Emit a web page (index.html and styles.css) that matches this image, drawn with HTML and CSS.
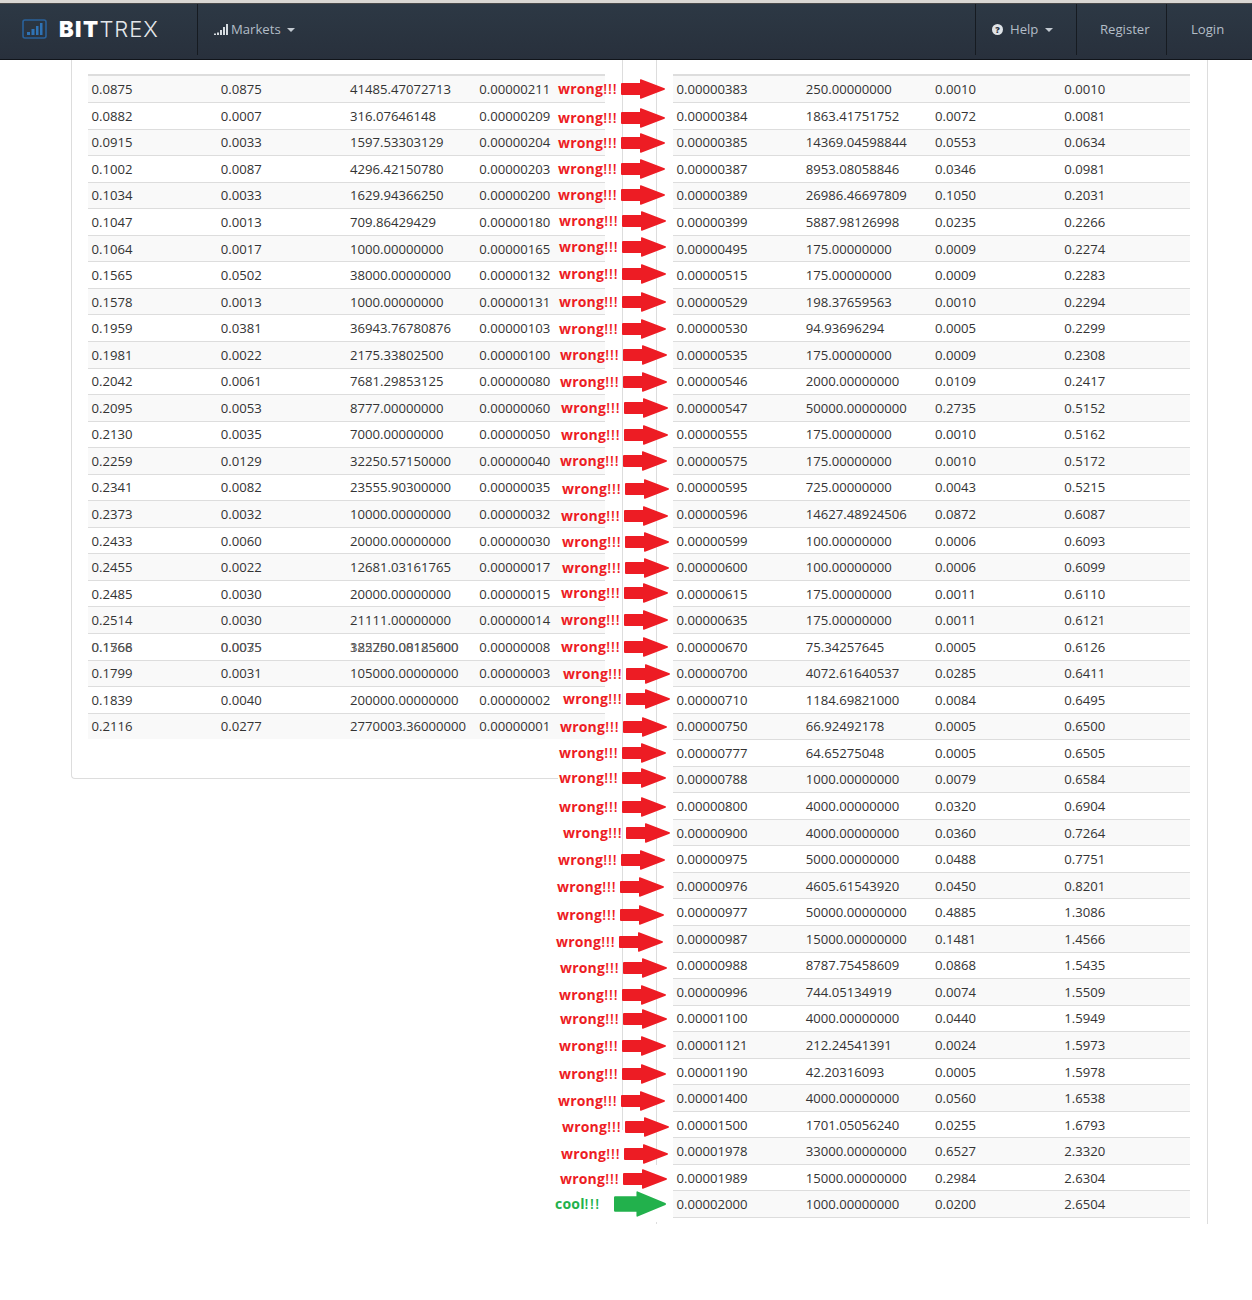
FILE: index.html
```html
<!DOCTYPE html>
<html lang="en">
<head>
<meta charset="utf-8">
<title>Bittrex</title>
<link rel="stylesheet" href="styles.css">
</head>
<body>
<header class="navbar">
  <div class="chrome"></div>
  <nav class="nav">
    <a class="brand">
      <svg class="brand-icon" width="25" height="20" viewBox="0 0 25 20"><rect x="1" y="1" width="23" height="18" rx="2" fill="none" stroke="#2a629b" stroke-width="1.6"/><path d="M5 13h3v3H5zM9.500 10h3v6h-3zM14 7h2.500v9H14zM18 4h2.500v12H18z" fill="#2f73b5"/></svg>
      <span class="brand-name"><b>BIT</b>TREX</span>
    </a>
    <a class="item item-markets">
      <svg class="bars" width="14" height="11" viewBox="0 0 14 11"><path d="M0 9.500h2V11H0zM3 8.500h2V11H3zM6 6h2v5H6zM9 3h2v8H9zM12 0h2v11h-2z" fill="#d5dbe0"/></svg>
      Markets<span class="caret"></span>
    </a>
    <div class="nav-right">
      <a class="item item-help"><span class="help-icon">?</span>Help<span class="caret"></span></a>
      <a class="item item-register">Register</a>
      <a class="item item-login">Login</a>
    </div>
  </nav>
</header>

<main class="board">
  <section class="panel panel-left">
    <div class="book">
      <div class="row head"><span>Sum (BTC)</span><span>Total (BTC)</span><span>Size (ETH)</span><span>Bid (BTC)</span></div>
      <div class="row"><span>0.0875</span><span>0.0875</span><span>41485.47072713</span><span>0.00000211</span></div>
      <div class="row"><span>0.0882</span><span>0.0007</span><span>316.07646148</span><span>0.00000209</span></div>
      <div class="row"><span>0.0915</span><span>0.0033</span><span>1597.53303129</span><span>0.00000204</span></div>
      <div class="row"><span>0.1002</span><span>0.0087</span><span>4296.42150780</span><span>0.00000203</span></div>
      <div class="row"><span>0.1034</span><span>0.0033</span><span>1629.94366250</span><span>0.00000200</span></div>
      <div class="row"><span>0.1047</span><span>0.0013</span><span>709.86429429</span><span>0.00000180</span></div>
      <div class="row"><span>0.1064</span><span>0.0017</span><span>1000.00000000</span><span>0.00000165</span></div>
      <div class="row"><span>0.1565</span><span>0.0502</span><span>38000.00000000</span><span>0.00000132</span></div>
      <div class="row"><span>0.1578</span><span>0.0013</span><span>1000.00000000</span><span>0.00000131</span></div>
      <div class="row"><span>0.1959</span><span>0.0381</span><span>36943.76780876</span><span>0.00000103</span></div>
      <div class="row"><span>0.1981</span><span>0.0022</span><span>2175.33802500</span><span>0.00000100</span></div>
      <div class="row"><span>0.2042</span><span>0.0061</span><span>7681.29853125</span><span>0.00000080</span></div>
      <div class="row"><span>0.2095</span><span>0.0053</span><span>8777.00000000</span><span>0.00000060</span></div>
      <div class="row"><span>0.2130</span><span>0.0035</span><span>7000.00000000</span><span>0.00000050</span></div>
      <div class="row"><span>0.2259</span><span>0.0129</span><span>32250.57150000</span><span>0.00000040</span></div>
      <div class="row"><span>0.2341</span><span>0.0082</span><span>23555.90300000</span><span>0.00000035</span></div>
      <div class="row"><span>0.2373</span><span>0.0032</span><span>10000.00000000</span><span>0.00000032</span></div>
      <div class="row"><span>0.2433</span><span>0.0060</span><span>20000.00000000</span><span>0.00000030</span></div>
      <div class="row"><span>0.2455</span><span>0.0022</span><span>12681.03161765</span><span>0.00000017</span></div>
      <div class="row"><span>0.2485</span><span>0.0030</span><span>20000.00000000</span><span>0.00000015</span></div>
      <div class="row"><span>0.2514</span><span>0.0030</span><span>21111.00000000</span><span>0.00000014</span></div>
      <div class="row"><span class="ghosted">0.1768<i>0.1566</i></span><span class="ghosted">0.0075<i>0.0035</i></span><span class="ghosted">125250.08125000<i>382700.00185600</i></span><span>0.00000008</span></div>
      <div class="row"><span>0.1799</span><span>0.0031</span><span>105000.00000000</span><span>0.00000003</span></div>
      <div class="row"><span>0.1839</span><span>0.0040</span><span>200000.00000000</span><span>0.00000002</span></div>
      <div class="row"><span>0.2116</span><span>0.0277</span><span>2770003.36000000</span><span>0.00000001</span></div>
    </div>
  </section>

  <section class="panel panel-right">
    <div class="book closed">
      <div class="row head"><span>Ask (BTC)</span><span>Size (ETH)</span><span>Total (BTC)</span><span>Sum (BTC)</span></div>
      <div class="row"><span>0.00000383</span><span>250.00000000</span><span>0.0010</span><span>0.0010</span></div>
      <div class="row"><span>0.00000384</span><span>1863.41751752</span><span>0.0072</span><span>0.0081</span></div>
      <div class="row"><span>0.00000385</span><span>14369.04598844</span><span>0.0553</span><span>0.0634</span></div>
      <div class="row"><span>0.00000387</span><span>8953.08058846</span><span>0.0346</span><span>0.0981</span></div>
      <div class="row"><span>0.00000389</span><span>26986.46697809</span><span>0.1050</span><span>0.2031</span></div>
      <div class="row"><span>0.00000399</span><span>5887.98126998</span><span>0.0235</span><span>0.2266</span></div>
      <div class="row"><span>0.00000495</span><span>175.00000000</span><span>0.0009</span><span>0.2274</span></div>
      <div class="row"><span>0.00000515</span><span>175.00000000</span><span>0.0009</span><span>0.2283</span></div>
      <div class="row"><span>0.00000529</span><span>198.37659563</span><span>0.0010</span><span>0.2294</span></div>
      <div class="row"><span>0.00000530</span><span>94.93696294</span><span>0.0005</span><span>0.2299</span></div>
      <div class="row"><span>0.00000535</span><span>175.00000000</span><span>0.0009</span><span>0.2308</span></div>
      <div class="row"><span>0.00000546</span><span>2000.00000000</span><span>0.0109</span><span>0.2417</span></div>
      <div class="row"><span>0.00000547</span><span>50000.00000000</span><span>0.2735</span><span>0.5152</span></div>
      <div class="row"><span>0.00000555</span><span>175.00000000</span><span>0.0010</span><span>0.5162</span></div>
      <div class="row"><span>0.00000575</span><span>175.00000000</span><span>0.0010</span><span>0.5172</span></div>
      <div class="row"><span>0.00000595</span><span>725.00000000</span><span>0.0043</span><span>0.5215</span></div>
      <div class="row"><span>0.00000596</span><span>14627.48924506</span><span>0.0872</span><span>0.6087</span></div>
      <div class="row"><span>0.00000599</span><span>100.00000000</span><span>0.0006</span><span>0.6093</span></div>
      <div class="row"><span>0.00000600</span><span>100.00000000</span><span>0.0006</span><span>0.6099</span></div>
      <div class="row"><span>0.00000615</span><span>175.00000000</span><span>0.0011</span><span>0.6110</span></div>
      <div class="row"><span>0.00000635</span><span>175.00000000</span><span>0.0011</span><span>0.6121</span></div>
      <div class="row"><span>0.00000670</span><span>75.34257645</span><span>0.0005</span><span>0.6126</span></div>
      <div class="row"><span>0.00000700</span><span>4072.61640537</span><span>0.0285</span><span>0.6411</span></div>
      <div class="row"><span>0.00000710</span><span>1184.69821000</span><span>0.0084</span><span>0.6495</span></div>
      <div class="row"><span>0.00000750</span><span>66.92492178</span><span>0.0005</span><span>0.6500</span></div>
      <div class="row"><span>0.00000777</span><span>64.65275048</span><span>0.0005</span><span>0.6505</span></div>
      <div class="row"><span>0.00000788</span><span>1000.00000000</span><span>0.0079</span><span>0.6584</span></div>
      <div class="row"><span>0.00000800</span><span>4000.00000000</span><span>0.0320</span><span>0.6904</span></div>
      <div class="row"><span>0.00000900</span><span>4000.00000000</span><span>0.0360</span><span>0.7264</span></div>
      <div class="row"><span>0.00000975</span><span>5000.00000000</span><span>0.0488</span><span>0.7751</span></div>
      <div class="row"><span>0.00000976</span><span>4605.61543920</span><span>0.0450</span><span>0.8201</span></div>
      <div class="row"><span>0.00000977</span><span>50000.00000000</span><span>0.4885</span><span>1.3086</span></div>
      <div class="row"><span>0.00000987</span><span>15000.00000000</span><span>0.1481</span><span>1.4566</span></div>
      <div class="row"><span>0.00000988</span><span>8787.75458609</span><span>0.0868</span><span>1.5435</span></div>
      <div class="row"><span>0.00000996</span><span>744.05134919</span><span>0.0074</span><span>1.5509</span></div>
      <div class="row"><span>0.00001100</span><span>4000.00000000</span><span>0.0440</span><span>1.5949</span></div>
      <div class="row"><span>0.00001121</span><span>212.24541391</span><span>0.0024</span><span>1.5973</span></div>
      <div class="row"><span>0.00001190</span><span>42.20316093</span><span>0.0005</span><span>1.5978</span></div>
      <div class="row"><span>0.00001400</span><span>4000.00000000</span><span>0.0560</span><span>1.6538</span></div>
      <div class="row"><span>0.00001500</span><span>1701.05056240</span><span>0.0255</span><span>1.6793</span></div>
      <div class="row"><span>0.00001978</span><span>33000.00000000</span><span>0.6527</span><span>2.3320</span></div>
      <div class="row"><span>0.00001989</span><span>15000.00000000</span><span>0.2984</span><span>2.6304</span></div>
      <div class="row"><span>0.00002000</span><span>1000.00000000</span><span>0.0200</span><span>2.6504</span></div>
    </div>
  </section>

  <div class="rule rule-a"></div>
  <div class="rule rule-b"></div>
  <div class="rule rule-c"></div>

  <svg width="0" height="0" class="defs"><defs><path id="arrow" d="M1 4H19V1Q19 0 20 0.300L43.500 9.300Q44.500 10 43.500 10.700L20 19.700Q19 20 19 19V16H1Q0 16 0 15V5Q0 4 1 4Z"/></defs></svg>

  <div class="note" style="left:558px;top:79px">wrong<em>!!!</em><svg class="arrow"><use href="#arrow"/></svg></div>
  <div class="note" style="left:558px;top:108px">wrong<em>!!!</em><svg class="arrow"><use href="#arrow"/></svg></div>
  <div class="note" style="left:558px;top:133px">wrong<em>!!!</em><svg class="arrow"><use href="#arrow"/></svg></div>
  <div class="note" style="left:558px;top:159px">wrong<em>!!!</em><svg class="arrow"><use href="#arrow"/></svg></div>
  <div class="note" style="left:558px;top:185px">wrong<em>!!!</em><svg class="arrow"><use href="#arrow"/></svg></div>
  <div class="note" style="left:559px;top:211px">wrong<em>!!!</em><svg class="arrow"><use href="#arrow"/></svg></div>
  <div class="note" style="left:559px;top:237px">wrong<em>!!!</em><svg class="arrow"><use href="#arrow"/></svg></div>
  <div class="note" style="left:559px;top:264px">wrong<em>!!!</em><svg class="arrow"><use href="#arrow"/></svg></div>
  <div class="note" style="left:559px;top:292px">wrong<em>!!!</em><svg class="arrow"><use href="#arrow"/></svg></div>
  <div class="note" style="left:559px;top:319px">wrong<em>!!!</em><svg class="arrow"><use href="#arrow"/></svg></div>
  <div class="note" style="left:560px;top:345px">wrong<em>!!!</em><svg class="arrow"><use href="#arrow"/></svg></div>
  <div class="note" style="left:560px;top:372px">wrong<em>!!!</em><svg class="arrow"><use href="#arrow"/></svg></div>
  <div class="note" style="left:561px;top:398px">wrong<em>!!!</em><svg class="arrow"><use href="#arrow"/></svg></div>
  <div class="note" style="left:561px;top:425px">wrong<em>!!!</em><svg class="arrow"><use href="#arrow"/></svg></div>
  <div class="note" style="left:560px;top:451px">wrong<em>!!!</em><svg class="arrow"><use href="#arrow"/></svg></div>
  <div class="note" style="left:562px;top:479px">wrong<em>!!!</em><svg class="arrow"><use href="#arrow"/></svg></div>
  <div class="note" style="left:561px;top:506px">wrong<em>!!!</em><svg class="arrow"><use href="#arrow"/></svg></div>
  <div class="note" style="left:562px;top:532px">wrong<em>!!!</em><svg class="arrow"><use href="#arrow"/></svg></div>
  <div class="note" style="left:562px;top:558px">wrong<em>!!!</em><svg class="arrow"><use href="#arrow"/></svg></div>
  <div class="note" style="left:561px;top:583px">wrong<em>!!!</em><svg class="arrow"><use href="#arrow"/></svg></div>
  <div class="note" style="left:561px;top:610px">wrong<em>!!!</em><svg class="arrow"><use href="#arrow"/></svg></div>
  <div class="note" style="left:561px;top:637px">wrong<em>!!!</em><svg class="arrow"><use href="#arrow"/></svg></div>
  <div class="note" style="left:563px;top:664px">wrong<em>!!!</em><svg class="arrow"><use href="#arrow"/></svg></div>
  <div class="note" style="left:563px;top:689px">wrong<em>!!!</em><svg class="arrow"><use href="#arrow"/></svg></div>
  <div class="note" style="left:560px;top:717px">wrong<em>!!!</em><svg class="arrow"><use href="#arrow"/></svg></div>
  <div class="note" style="left:559px;top:743px">wrong<em>!!!</em><svg class="arrow"><use href="#arrow"/></svg></div>
  <div class="note" style="left:559px;top:768px">wrong<em>!!!</em><svg class="arrow"><use href="#arrow"/></svg></div>
  <div class="note" style="left:559px;top:797px">wrong<em>!!!</em><svg class="arrow"><use href="#arrow"/></svg></div>
  <div class="note" style="left:563px;top:823px">wrong<em>!!!</em><svg class="arrow"><use href="#arrow"/></svg></div>
  <div class="note" style="left:558px;top:850px">wrong<em>!!!</em><svg class="arrow"><use href="#arrow"/></svg></div>
  <div class="note" style="left:557px;top:877px">wrong<em>!!!</em><svg class="arrow"><use href="#arrow"/></svg></div>
  <div class="note" style="left:557px;top:905px">wrong<em>!!!</em><svg class="arrow"><use href="#arrow"/></svg></div>
  <div class="note" style="left:556px;top:932px">wrong<em>!!!</em><svg class="arrow"><use href="#arrow"/></svg></div>
  <div class="note" style="left:560px;top:958px">wrong<em>!!!</em><svg class="arrow"><use href="#arrow"/></svg></div>
  <div class="note" style="left:559px;top:985px">wrong<em>!!!</em><svg class="arrow"><use href="#arrow"/></svg></div>
  <div class="note" style="left:560px;top:1009px">wrong<em>!!!</em><svg class="arrow"><use href="#arrow"/></svg></div>
  <div class="note" style="left:559px;top:1036px">wrong<em>!!!</em><svg class="arrow"><use href="#arrow"/></svg></div>
  <div class="note" style="left:559px;top:1064px">wrong<em>!!!</em><svg class="arrow"><use href="#arrow"/></svg></div>
  <div class="note" style="left:558px;top:1091px">wrong<em>!!!</em><svg class="arrow"><use href="#arrow"/></svg></div>
  <div class="note" style="left:562px;top:1117px">wrong<em>!!!</em><svg class="arrow"><use href="#arrow"/></svg></div>
  <div class="note" style="left:561px;top:1144px">wrong<em>!!!</em><svg class="arrow"><use href="#arrow"/></svg></div>
  <div class="note" style="left:560px;top:1169px">wrong<em>!!!</em><svg class="arrow"><use href="#arrow"/></svg></div>
  <div class="note note-good" style="left:555px;top:1191px">cool<em>!!!</em><svg class="arrow arrow-good" viewBox="0 0 44 20" preserveAspectRatio="none"><use href="#arrow"/></svg></div>
</main>
</body>
</html>
```

FILE: styles.css
```css
* { box-sizing: border-box; }

html, body {
  margin: 0;
  padding: 0;
  background: #fff;
}

body {
  font-family: "Open Sans", "Liberation Sans", sans-serif;
  font-size: 13.130px;
  color: #333;
  position: relative;
  height: 1300px;
  overflow: hidden;
}

/* navbar */
.navbar {
  position: absolute;
  top: 0;
  left: 0;
  right: 0;
  height: 60px;
  z-index: 5;
  background: linear-gradient(#2d3945, #28303c);
  border-bottom: 1px solid #10141a;
}

.chrome {
  height: 4px;
  background: #d9d7d3;
  border-bottom: 1px solid #4a4a4a;
}

.nav {
  display: flex;
  height: 51px;
  color: #b3bdc7;
}

.brand {
  display: flex;
  align-items: center;
  width: 198px;
  padding: 0 0 1px 22px;
  border-right: 1px solid #161b21;
}

.brand-icon { margin-right: 12px; }

.brand-name {
  font-family: Inter, "Liberation Sans", sans-serif;
  font-size: 22px;
  font-weight: 300;
  color: #e4e7ea;
  letter-spacing: 0.900px;
}

.brand-name b {
  font-weight: 900;
  color: #fff;
  letter-spacing: 1.400px;
}

.item {
  display: flex;
  align-items: center;
  white-space: nowrap;
  padding-bottom: 1px;
}

.item-markets { padding-left: 16px; }

.bars { margin: 0 3px 0 0; }

.caret {
  width: 0;
  height: 0;
  margin: 2px 0 0 6px;
  border-left: 4.500px solid transparent;
  border-right: 4.500px solid transparent;
  border-top: 4.500px solid #c3cad1;
}

.nav-right {
  display: flex;
  margin-left: auto;
}

.item-help {
  width: 101px;
  padding-left: 16px;
  border-left: 1px solid #161b21;
}

.item-help .caret { margin-left: 7px; }

.help-icon {
  width: 11px;
  height: 11px;
  margin-right: 7px;
  border-radius: 50%;
  background: #dfe3e7;
  color: #2b3440;
  font-size: 9px;
  font-weight: 800;
  line-height: 11px;
  text-align: center;
}

.item-register {
  width: 90px;
  padding-left: 23px;
  border-left: 1px solid #161b21;
}

.item-login {
  width: 86px;
  padding-left: 24px;
  border-left: 1px solid #161b21;
}

/* order books */
.board {
  position: relative;
  display: flex;
  align-items: flex-start;
  padding-left: 71px;
}

.panel-left {
  flex: none;
  width: 487px;
  height: 779px;
  padding-left: 16px;
  margin-right: 98px;
  border-left: 1px solid #ddd;
  border-bottom: 1px solid #ddd;
  border-bottom-left-radius: 4px;
}

.panel-right {
  flex: none;
  width: 552px;
  height: 1224px;
  padding-left: 17px;
  border-right: 1px solid #ddd;
}

.book { width: 517px; }

.row {
  display: grid;
  grid-template-columns: repeat(4, 1fr);
  align-items: center;
  height: 26.550px;
  border-top: 1px solid #ddd;
  white-space: nowrap;
}

.row span {
  position: relative;
  padding-left: 3.500px;
}

.row:nth-child(even) { background: #f9f9f9; }

.closed .row:last-child { height: 27.200px; border-bottom: 1px solid #ddd; }

.row.head {
  align-items: start;
  height: 75.500px;
  padding-top: 42px;
  border-top: 0;
  border-bottom: 2px solid #ddd;
  font-weight: 700;
}

.row.head + .row { border-top: 0; }

.ghosted { color: #555; }

.ghosted i {
  position: absolute;
  left: 3.500px;
  top: 0;
  font-style: normal;
}

/* annotations */
.rule {
  position: absolute;
  width: 1px;
  background: #ddd;
}

.rule-a { left: 622px; top: 60px; height: 1070px; }
.rule-b { left: 656px; top: 60px; height: 1105px; }
.rule-c { left: 656px; top: 1222px; height: 2px; }

.defs { position: absolute; }

.note {
  position: absolute;
  display: flex;
  align-items: center;
  height: 20px;
  color: #ed1c24;
  font-size: 14px;
  font-weight: 700;
  letter-spacing: 0.200px;
  line-height: 20px;
  white-space: nowrap;
}

.note em {
  font-style: normal;
  font-weight: 600;
  letter-spacing: 1px;
  margin-right: 3px;
}

.arrow {
  flex: none;
  width: 44px;
  height: 20px;
  fill: #ed1c24;
}

.note-good {
  height: 26px;
  color: #22b14c;
}

.note-good em {
  letter-spacing: 1.500px;
  margin-right: 13px;
}

.arrow-good {
  width: 52px;
  height: 26px;
  fill: #22b14c;
}
```
